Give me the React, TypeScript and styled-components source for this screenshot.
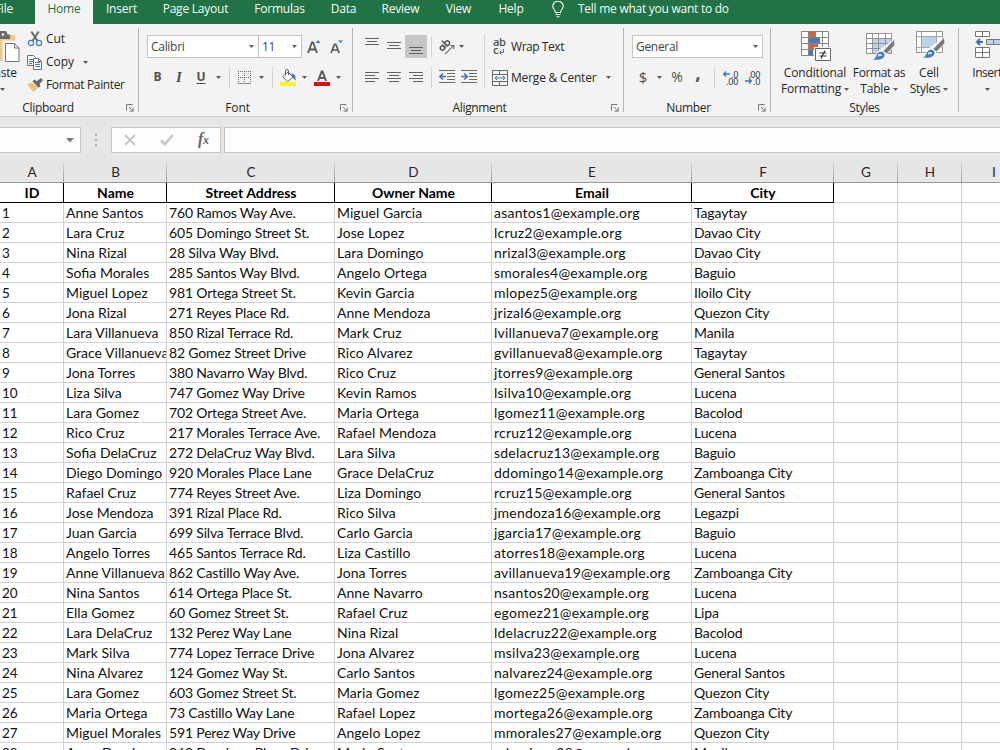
import React from "react";
import styled, { createGlobalStyle } from "styled-components";

const UI = '"Open Sans", "Noto Sans", sans-serif';
const SHEET = 'Lato, "Open Sans", sans-serif';

const GlobalStyle = createGlobalStyle`
  *, *::before, *::after { box-sizing: border-box; }
  html, body { margin: 0; padding: 0; overflow: hidden; background: #fff; }
`;

const Window = styled.div`
  width: 1000px;
  height: 750px;
  overflow: hidden;
  display: flex;
  flex-direction: column;
  background: #fff;
  color: #262626;
  font: 12px/16px ${UI};
  font-variant-ligatures: none;
  white-space: nowrap;
`;

/* ---------- tab strip ---------- */
const TabStrip = styled.nav`
  display: flex;
  flex: none;
  height: 24px;
  background: #217346;
  color: #f4faf6;
`;

const Tab = styled.div<{ $w: number; $active?: boolean }>`
  flex: none;
  width: ${(p) => p.$w}px;
  display: flex;
  justify-content: center;
  padding-top: 1px;
  letter-spacing: -0.22px;
  background: ${(p) => (p.$active ? "#f3f3f3" : "transparent")};
  color: ${(p) => (p.$active ? "#217346" : "inherit")};
`;

const FileTab = styled(Tab)`
  justify-content: flex-end;
  padding-right: 22px;
`;

const TellMe = styled.div`
  display: flex;
  align-items: flex-start;
  gap: 14px;
  padding-left: 15px;
  padding-top: 1px;
  letter-spacing: -0.26px;
`;

/* ---------- ribbon ---------- */
const Ribbon = styled.div`
  display: flex;
  flex: none;
  height: 93px;
  padding: 4px 0;
  background: #f3f3f3;
  border-bottom: 1px solid #cbcbcb;
`;

const Group = styled.section<{ $w: number }>`
  flex: none;
  width: ${(p) => p.$w}px;
  display: flex;
  flex-direction: column;
  border-right: 1px solid #b4b4b4;
`;

const GroupBody = styled.div<{ $left?: number }>`
  flex: 1;
  display: flex;
  padding-left: ${(p) => p.$left ?? 0}px;
`;

const GroupFooter = styled.footer<{ $inset?: number; $ls?: number }>`
  flex: none;
  display: grid;
  grid-template-columns: 12px 1fr 12px;
  align-items: center;
  height: 9px;
  line-height: 9px;
  letter-spacing: ${(p) => p.$ls ?? -0.1}px;
  span {
    text-align: center;
    padding-right: ${(p) => p.$inset ?? 0}px;
  }
`;

const Stack = styled.div`
  display: flex;
  flex-direction: column;
`;

const ToolRow = styled.div<{ $h?: number }>`
  display: flex;
  align-items: center;
  height: ${(p) => p.$h ?? 23}px;
`;

const ToolRows = styled.div`
  display: flex;
  flex-direction: column;
  gap: 8px;
  padding-top: 7px;
`;

const Slot = styled.div<{ $w: number; $on?: boolean }>`
  flex: none;
  width: ${(p) => p.$w}px;
  height: 23px;
  display: flex;
  align-items: center;
  justify-content: center;
  background: ${(p) => (p.$on ? "#c6c6c6" : "transparent")};
`;

const Glyph = styled(Slot)<{ $size?: number; $weight?: number; $italic?: boolean; $underline?: boolean; $raise?: number }>`
  padding-bottom: ${(p) => p.$raise ?? 2}px;
  font-size: ${(p) => p.$size ?? 12}px;
  font-weight: ${(p) => p.$weight ?? 700};
  font-style: ${(p) => (p.$italic ? "italic" : "normal")};
  font-family: ${(p) => (p.$italic ? '"Liberation Serif", serif' : UI)};
  text-decoration: ${(p) => (p.$underline ? "underline" : "none")};
  text-underline-offset: 2px;
  color: #505050;
`;

const Rule = styled.div<{ $before?: number; $after?: number; $h?: number }>`
  flex: none;
  width: 1px;
  height: ${(p) => p.$h ?? 21}px;
  margin-left: ${(p) => p.$before ?? 0}px;
  margin-right: ${(p) => p.$after ?? 0}px;
  background: #d2d2d2;
`;

const Combo = styled.div<{ $w: number; $joined?: boolean }>`
  flex: none;
  width: ${(p) => p.$w}px;
  height: 23px;
  margin-left: ${(p) => (p.$joined ? -1 : 0)}px;
  display: flex;
  align-items: center;
  justify-content: space-between;
  padding: 0 4px 0 3px;
  letter-spacing: -0.3px;
  background: #fff;
  border: 1px solid #c3c3c3;
  color: #444;
`;

const Command = styled.div<{ $h: number; $gap?: number; $ls?: number }>`
  display: flex;
  align-items: center;
  height: ${(p) => p.$h}px;
  gap: ${(p) => p.$gap ?? 3}px;
  letter-spacing: ${(p) => p.$ls ?? -0.1}px;
`;

const CaretBox = styled.span<{ $left?: number }>`
  display: flex;
  margin-left: ${(p) => p.$left ?? 0}px;
`;

const BigButton = styled.div<{ $w: number; $pull?: number }>`
  flex: none;
  width: ${(p) => p.$w}px;
  margin-left: ${(p) => p.$pull ?? 0}px;
  display: flex;
  flex-direction: column;
  align-items: center;
  padding-top: 3px;
  svg { flex: none; }
`;

const BigLine = styled.span<{ $ls?: number }>`
  display: flex;
  align-items: center;
  gap: 3px;
  height: 16px;
  letter-spacing: ${(p) => p.$ls ?? -0.15}px;
`;

const BigIcon = styled.div<{ $nudge?: number }>`
  height: 34px;
  display: flex;
  padding-left: ${(p) => p.$nudge ?? 0}px;
`;

/* ---------- formula bar ---------- */
const FormulaBar = styled.div`
  display: flex;
  flex: none;
  height: 36px;
  padding-top: 10px;
  background: #e6e6e6;
`;

const Box = styled.div<{ $w?: number }>`
  flex: ${(p) => (p.$w ? "none" : "1")};
  width: ${(p) => (p.$w ? `${p.$w}px` : "auto")};
  height: 26px;
  display: flex;
  align-items: center;
  background: #fdfdfd;
  border: 1px solid #c4c4c4;
`;

const NameBox = styled(Box)`
  justify-content: flex-end;
  padding-right: 6px;
  border-left: 0;
`;

const FormulaInput = styled(Box)`
  border-right: 0;
`;

const Actions = styled(Box)`
  gap: 24px;
  padding-left: 12px;
  margin-right: 3px;
`;

const Grip = styled.div`
  flex: none;
  width: 30px;
  display: flex;
  align-items: center;
  justify-content: center;
`;

/* ---------- sheet ---------- */
const COLUMNS = "64px 103px 168px 157px 200px 142px 64px 64px 64px";

const Letters = styled.div`
  display: grid;
  flex: none;
  grid-template-columns: ${COLUMNS};
  height: 30px;
  padding-top: 9px;
  background: #e6e6e6;
  border-bottom: 1px solid #999;
`;

const Letter = styled.div`
  display: flex;
  justify-content: center;
  align-items: center;
  padding-left: 1px;
  border-right: 1px solid;
  border-image: linear-gradient(#d6d6d6, #9a9a9a) 1;
  font: 13.5px/18px ${SHEET};
  color: #262626;
`;

const Row = styled.div`
  display: grid;
  flex: none;
  grid-template-columns: ${COLUMNS};
  height: 20px;
`;

const Cell = styled.div<{ $ls?: number; $size?: number }>`
  overflow: hidden;
  padding-left: 2px;
  border-right: 1px solid #d0d0d0;
  border-bottom: 1px solid #d0d0d0;
  font: ${(p) => p.$size ?? 14}px/20px ${SHEET};
  letter-spacing: ${(p) => p.$ls ?? 0}px;
  color: #111;
`;

const HeadCell = styled(Cell)`
  padding-left: 1px;
  text-align: center;
  font-weight: 700;
  color: #000;
  border-color: #000;
`;

/* ---------- icons ---------- */
const Caret = ({ left }: { left?: number }) => (
  <CaretBox $left={left}>
    <svg width="5" height="3" viewBox="0 0 5 3"><path d="M0 0h5L2.5 3z" fill="#5c5c5c" /></svg>
  </CaretBox>
);

const Launcher = () => (
  <svg width="8" height="8" viewBox="0 0 8 8" fill="none" stroke="#777">
    <path d="M.5 6.5v-6h6M3 3l4 4M7.2 3.5v3.7H3.5" />
  </svg>
);

const BulbIcon = () => (
  <svg width="12" height="17" viewBox="0 0 12 17" fill="none" stroke="#fff" strokeWidth="1.1">
    <path d="M3.5 11.5C3.5 9 .8 8.300.8 5.200A5.200 5 0 0 1 11.200 5.200C11.200 8.300 8.500 9 8.500 11.500zM3.500 13.500h5M4.500 15.700h3" />
  </svg>
);

const PasteIcon = () => (
  <svg width="36" height="32" viewBox="0 0 36 32">
    <path d="M2 4h29v26H2z" fill="#efc887" />
    <path d="M10 8V3.500h4.500a3.500 3.500 0 0 1 9 0H26V8z" fill="#6b6b6b" />
    <circle cx="19" cy="3.500" r="1.300" fill="#f3f3f3" />
    <path d="M19.500 10.500h12l4 4.500v15.500h-16z" fill="#f3f3f3" stroke="#f3f3f3" strokeWidth="2" />
    <path d="M21.500 12.500h9l4.500 4.500v13.500H21.500zM30.500 12.500V17H35" fill="#fff" stroke="#737373" />
  </svg>
);

const CutIcon = () => (
  <svg width="16" height="16" viewBox="0 0 16 16" fill="none">
    <path d="M4.300.5 10.500 10M11.700.5 5.500 10" stroke="#6a6a6a" strokeWidth="2" />
    <circle cx="4" cy="12" r="2.600" stroke="#4a7ebb" strokeWidth="1.200" />
    <circle cx="12" cy="12" r="2.600" stroke="#4a7ebb" strokeWidth="1.200" />
  </svg>
);

const CopyIcon = () => (
  <svg width="16" height="15" viewBox="0 0 16 15" fill="#fff" stroke="#6e6e6e">
    <path d="M.5.500h6l2 2v8h-8z" />
    <path d="M2 4.500h4M2 6.500h4M2 8.500h3" stroke="#4a7ebb" />
    <path d="M6.500 3.500h5l3 3v8h-8zM11.500 3.500v3h3" />
    <path d="M8 7.500h5M8 9.500h5M8 11.500h5" stroke="#4a7ebb" />
  </svg>
);

const BrushIcon = () => (
  <svg width="16" height="14" viewBox="0 0 16 14">
    <path d="M0 6.500 6 4l5.500 5.500L6.500 14z" fill="#efc07a" />
    <path d="m5.500 3.200 2-1.700 2.300 1.700L14 0l2 2-3.500 4 1 2-2 1.700z" fill="#666" />
    <path d="m5 4 6.300 6" stroke="#f3f3f3" strokeWidth=".8" />
  </svg>
);

const GrowFont = ({ down }: { down?: boolean }) => (
  <svg width="14" height="16" viewBox="0 0 14 16">
    {down ? (
      <>
        <path d="M1 14 4.500 5.300h1.300L9.200 14M2.400 11h5.500" fill="none" stroke="#595959" strokeWidth="1.700" />
        <path d="M8 1.500h5L10.500 4z" fill="#3f74b5" />
      </>
    ) : (
      <>
        <path d="M1 14 5 3.300h1L10 14M2.500 10.500h6" fill="none" stroke="#595959" strokeWidth="1.800" />
        <path d="M8.500 4h5L11 1.300z" fill="#3f74b5" />
      </>
    )}
  </svg>
);

const BordersIcon = () => (
  <svg width="14" height="14" viewBox="0 0 14 14" stroke="#666" fill="none">
    <path d="M0 .5h14M0 6.500h14M.5 0v12M6.500 0v12M12.500 0v12" strokeDasharray="1 1" />
    <path d="M0 12.500h13" stroke="#8a8a8a" />
  </svg>
);

const FillIcon = () => (
  <svg width="16" height="17" viewBox="0 0 16 17">
    <path d="M2.500 7.500 8 3l5 5-5.500 4.500z" fill="#fff" stroke="#666" />
    <path d="M5.500 6V2a1.500 1.500 0 0 1 3 0v4" fill="none" stroke="#666" />
    <path d="M11.500 4.500c3 .5 4.500 2.500 4 7l-3-3.500z" fill="#3f74b5" />
    <rect y="13" width="16" height="4" fill="#fbf520" />
  </svg>
);

const FontColorIcon = () => (
  <svg width="16" height="16" viewBox="0 0 16 16">
    <path d="M4 11 7.700 1.500h.8L12 11M5.300 8h5.500" fill="none" stroke="#595959" strokeWidth="2" />
    <rect y="12" width="16" height="4" fill="#d90f12" />
  </svg>
);

const Lines = ({ rows }: { rows: [number, number, number][] }) => (
  <svg width="14" height="19" viewBox="0 0 14 19" fill="#616161">
    {rows.map(([x, y, w]) => <rect key={y} x={x} y={y} width={w} height="1" />)}
  </svg>
);

const OrientationIcon = () => (
  <svg width="17" height="16" viewBox="0 0 17 16">
    <g transform="rotate(-45 6 6)" fill="none" stroke="#505050" strokeWidth="1.400">
      <circle cx="2.800" cy="7" r="2.200" />
      <path d="M5 4.500v5M7.500 1.500v8" />
      <circle cx="9.700" cy="7" r="2.200" />
    </g>
    <path d="M7 15.200 15.500 6.700M12.300 6.500h3.500V10" fill="none" stroke="#6a6a6a" strokeWidth="1.200" />
  </svg>
);

const IndentIcon = ({ right }: { right?: boolean }) => (
  <svg width="16" height="15" viewBox="0 0 16 15" fill="none">
    <path d="M0 .5h16M8 3.500h8M8 6.500h8M8 9.500h8M0 12.500h16" stroke="#6a6a6a" />
    {right
      ? <path d="M0 6.500h5M3.200 3.500l3 3-3 3" stroke="#3f74b5" strokeWidth="1.700" />
      : <path d="M7 6.500H2M4 3.500l-3 3 3 3" stroke="#3f74b5" strokeWidth="1.700" />}
  </svg>
);

const WrapGlyph = styled.span`
  position: relative;
  width: 15px;
  height: 18px;
  padding-left: 1px;
  font: 600 11px/8px ${UI};
  letter-spacing: -0.4px;
  color: #505050;
  white-space: pre-line;
  svg { position: absolute; right: 2px; bottom: 1px; }
`;

const WrapIcon = () => (
  <WrapGlyph>
    {"ab\nc"}
    <svg width="6" height="6" viewBox="0 0 6 6" fill="none" stroke="#3f74b5"><path d="M4.500 0v3.500H1M2.500 1.500l-2 2 2 2" /></svg>
  </WrapGlyph>
);

const MergeIcon = () => (
  <svg width="16" height="16" viewBox="0 0 16 16" fill="none" stroke="#6a6a6a">
    <path d="M.5.500h15v15H.5zM.5 4.500h15M.5 11.500h15M7.500.5v4M7.500 11.500v4" />
    <path d="M3 8h10M5 6 3 8l2 2M11 6l2 2-2 2" stroke="#3f74b5" />
  </svg>
);

const DecimalGlyph = styled.span`
  display: flex;
  flex-direction: column;
  align-items: flex-end;
  width: 16px;
  font: 9px/7px "Noto Sans", sans-serif;
  letter-spacing: -0.3px;
  color: #333;
  div { display: flex; align-items: center; gap: 1px; height: 7px; }
`;

const DecimalIcon = ({ fewer }: { fewer?: boolean }) => {
  const arrow = (
    <svg width="7" height="6" viewBox="0 0 7 6" fill="none" stroke="#3f74b5" strokeWidth="1.300">
      <path d={fewer ? "M0 3h6M4 .5 6.300 3 4 5.500" : "M7 3H1M3 .5.700 3 3 5.500"} />
    </svg>
  );
  return (
    <DecimalGlyph>
      <div>{fewer ? ".00" : <>{arrow}.0</>}</div>
      <div>{fewer ? <>{arrow}.0</> : ".00"}</div>
    </DecimalGlyph>
  );
};

const BrushOverlay = ({ x, y }: { x: number; y: number }) => (
  <g transform={`translate(${x} ${y})`}>
    <path d="M21.500 0v7L12 17l-5 4H-1l8-11z" fill="#f3f3f3" />
    <path d="m21 1 .5 5-8 8.500-3-2.500z" fill="#777" />
    <path d="M0 20.500c3-1 3-4 5-6.500 3-2.500 7-.5 6.500 2.500-.8 4-6.500 5-11.500 4z" fill="#3f7dbd" />
    <path d="M5.500 17.500c0-2 2.500-2.500 3-.5" fill="none" stroke="#fff" strokeWidth="1.300" />
  </g>
);

const ConditionalIcon = () => (
  <svg width="30" height="30" viewBox="0 0 30 30">
    <path d="M.5.500h27v24H.5z" fill="#fff" />
    <path d="M8 1h6v5H8zM8 13h9v5H8z" fill="#d9603b" />
    <path d="M8 7h11v5H8zM8 19h4v5H8z" fill="#3f7dbd" />
    <path d="M.5.500h27v24H.5zM.5 6.500h27M.5 12.500h27M.5 18.500h27M7.500.5v24M14.500.5v6M21.500.5v24" fill="none" stroke="#858585" />
    <path d="M13 16h17v14H13z" fill="#f3f3f3" />
    <path d="M14.500 17.500h15v12h-15z" fill="#fff" stroke="#666" />
    <path d="M18.500 22h7M18.500 25h7M24 19.500l-4 8" stroke="#333" strokeWidth="1.200" fill="none" />
  </svg>
);

const FormatTableIcon = () => (
  <svg width="30" height="30" viewBox="0 0 30 30">
    <path d="M.5 2.500h25v20H.5z" fill="#fff" />
    <path d="M7 8h18v14H7z" fill="#bdd2ea" />
    <path d="M.5 2.500h25v20H.5zM.5 7.500h25M.5 12.500h25M.5 17.500h25M6.500 2.500v20M12.500 2.500v20M19.500 2.500v20" fill="none" stroke="#929292" />
    <BrushOverlay x={7} y={8} />
  </svg>
);

const CellStylesIcon = () => (
  <svg width="30" height="30" viewBox="0 0 30 30">
    <path d="M.5.500h26v21H.5z" fill="#fff" stroke="#929292" />
    <path d="M.5 5.500h26M.5 16.500h26M5.500.5v21M20.500.5v21" fill="none" stroke="#a5a5a5" />
    <path d="M6 6h14v10H6z" fill="#bdd2ea" />
    <BrushOverlay x={7} y={6} />
  </svg>
);

const InsertIcon = () => (
  <svg width="32" height="30" viewBox="0 0 32 30">
    <g fill="#fff" stroke="#777">
      <path d="M.5.500h14v5H.5zM7.500.5v5M.5 16.500h14v10H.5zM.5 21.500h14M7.500 16.500v10" />
      <path d="M11.500 8.500h20v5h-20zM18.500 8.500v5" fill="#bdd2ea" />
    </g>
    <path d="M8 11H2M5 8l-3 3 3 3" fill="none" stroke="#3f74b5" strokeWidth="2" />
  </svg>
);

const CancelIcon = () => (
  <svg width="12" height="12" viewBox="0 0 12 12" fill="none" stroke="#c3c3c3" strokeWidth="1.900"><path d="m1 1 10 10M11 1 1 11" /></svg>
);
const EnterIcon = () => (
  <svg width="14" height="12" viewBox="0 0 14 12" fill="none" stroke="#c6c6c6" strokeWidth="2.600"><path d="m1 6.500 3.800 3.700L13 1" /></svg>
);

const Fx = styled.span`
  padding-bottom: 2px;
  font: italic 700 16px/18px "Liberation Serif", serif;
  letter-spacing: -0.3px;
  color: #666;
  small { font-size: 12px; }
`;

/* ---------- data ---------- */
const TABS: [string, number][] = [
  ["Home", 58], ["Insert", 57], ["Page Layout", 91], ["Formulas", 77],
  ["Data", 51], ["Review", 63], ["View", 53], ["Help", 52],
];

const HEAD = ["ID", "Name", "Street Address", "Owner Name", "Email", "City"];

/* letter spacing of each data column */
const SPACING = [-0.2, 0, -0.17, 0.05, 0.23, -0.13];

const DATA = `Anne Santos|760 Ramos Way Ave.|Miguel Garcia|asantos1|Tagaytay
Lara Cruz|605 Domingo Street St.|Jose Lopez|lcruz2|Davao City
Nina Rizal|28 Silva Way Blvd.|Lara Domingo|nrizal3|Davao City
Sofia Morales|285 Santos Way Blvd.|Angelo Ortega|smorales4|Baguio
Miguel Lopez|981 Ortega Street St.|Kevin Garcia|mlopez5|Iloilo City
Jona Rizal|271 Reyes Place Rd.|Anne Mendoza|jrizal6|Quezon City
Lara Villanueva|850 Rizal Terrace Rd.|Mark Cruz|lvillanueva7|Manila
Grace Villanueva|82 Gomez Street Drive|Rico Alvarez|gvillanueva8|Tagaytay
Jona Torres|380 Navarro Way Blvd.|Rico Cruz|jtorres9|General Santos
Liza Silva|747 Gomez Way Drive|Kevin Ramos|lsilva10|Lucena
Lara Gomez|702 Ortega Street Ave.|Maria Ortega|lgomez11|Bacolod
Rico Cruz|217 Morales Terrace Ave.|Rafael Mendoza|rcruz12|Lucena
Sofia DelaCruz|272 DelaCruz Way Blvd.|Lara Silva|sdelacruz13|Baguio
Diego Domingo|920 Morales Place Lane|Grace DelaCruz|ddomingo14|Zamboanga City
Rafael Cruz|774 Reyes Street Ave.|Liza Domingo|rcruz15|General Santos
Jose Mendoza|391 Rizal Place Rd.|Rico Silva|jmendoza16|Legazpi
Juan Garcia|699 Silva Terrace Blvd.|Carlo Garcia|jgarcia17|Baguio
Angelo Torres|465 Santos Terrace Rd.|Liza Castillo|atorres18|Lucena
Anne Villanueva|862 Castillo Way Ave.|Jona Torres|avillanueva19|Zamboanga City
Nina Santos|614 Ortega Place St.|Anne Navarro|nsantos20|Lucena
Ella Gomez|60 Gomez Street St.|Rafael Cruz|egomez21|Lipa
Lara DelaCruz|132 Perez Way Lane|Nina Rizal|ldelacruz22|Bacolod
Mark Silva|774 Lopez Terrace Drive|Jona Alvarez|msilva23|Lucena
Nina Alvarez|124 Gomez Way St.|Carlo Santos|nalvarez24|General Santos
Lara Gomez|603 Gomez Street St.|Maria Gomez|lgomez25|Quezon City
Maria Ortega|73 Castillo Way Lane|Rafael Lopez|mortega26|Zamboanga City
Miguel Morales|591 Perez Way Drive|Angelo Lopez|mmorales27|Quezon City
Anne Domingo|363 Domingo Place Drive|Mario Santos|adomingo28|Manila`
  .split("\n")
  .map((line, i) => {
    const [name, street, owner, user, city] = line.split("|");
    return [String(i + 1), name, street, owner, `${user}@example.org`, city];
  });

const BLANK = ["G", "H", "I"];

export default function App() {
  return (
    <Window>
      <GlobalStyle />
      <TabStrip>
        <FileTab $w={35}>File</FileTab>
        {TABS.map(([name, w]) => <Tab key={name} $w={w} $active={name === "Home"}>{name}</Tab>)}
        <TellMe><BulbIcon /><span>Tell me what you want to do</span></TellMe>
      </TabStrip>

      <Ribbon>
        <Group $w={139}>
          <GroupBody>
            <BigButton $w={36} $pull={-16}>
              <BigIcon><PasteIcon /></BigIcon>
              <BigLine>Paste</BigLine>
              <BigLine><Caret /></BigLine>
            </BigButton>
            <GroupBody $left={7}>
              <Stack>
                <Command $h={22}><CutIcon />Cut</Command>
                <Command $h={24} $ls={-0.05}><CopyIcon />Copy<Caret left={6} /></Command>
                <Command $h={22} $ls={-0.36}><BrushIcon />Format Painter</Command>
              </Stack>
            </GroupBody>
          </GroupBody>
          <GroupFooter $inset={42} $ls={-0.35}><i /><span>Clipboard</span><Launcher /></GroupFooter>
        </Group>

        <Group $w={214}>
          <GroupBody $left={8}>
            <ToolRows>
              <ToolRow>
                <Combo $w={112}>Calibri<Caret /></Combo>
                <Combo $w={44} $joined>11<Caret /></Combo>
                <Slot $w={24}><GrowFont /></Slot>
                <Slot $w={21}><GrowFont down /></Slot>
              </ToolRow>
              <ToolRow>
                <Glyph $w={21}>B</Glyph>
                <Glyph $w={22} $italic $size={15}>I</Glyph>
                <Glyph $w={22} $underline>U</Glyph>
                <Slot $w={12}><Caret /></Slot>
                <Rule $before={5} $after={8} />
                <BordersIcon />
                <Slot $w={18}><Caret /></Slot>
                <Rule $before={2} $after={7} />
                <FillIcon />
                <Slot $w={16}><Caret /></Slot>
                <Slot $w={2} />
                <FontColorIcon />
                <Slot $w={16}><Caret /></Slot>
              </ToolRow>
            </ToolRows>
          </GroupBody>
          <GroupFooter $inset={16}><i /><span>Font</span><Launcher /></GroupFooter>
        </Group>

        <Group $w={271}>
          <GroupBody $left={8}>
            <ToolRows>
              <ToolRow>
                <Slot $w={22}><Lines rows={[[0, 1, 14], [2, 4, 10], [0, 7, 14]]} /></Slot>
                <Slot $w={22}><Lines rows={[[0, 5, 14], [2, 8, 10], [0, 11, 14]]} /></Slot>
                <Slot $w={22} $on><Lines rows={[[0, 10, 14], [2, 13, 10], [0, 16, 14]]} /></Slot>
                <Rule $before={4} $after={6} />
                <OrientationIcon />
                <Slot $w={12}><Caret /></Slot>
              </ToolRow>
              <ToolRow>
                <Slot $w={22}><Lines rows={[[0, 4, 14], [0, 7, 10], [0, 10, 14], [0, 13, 10]]} /></Slot>
                <Slot $w={22}><Lines rows={[[0, 4, 14], [2, 7, 10], [0, 10, 14], [2, 13, 10]]} /></Slot>
                <Slot $w={22}><Lines rows={[[0, 4, 14], [4, 7, 10], [0, 10, 14], [4, 13, 10]]} /></Slot>
                <Rule $before={4} $after={7} />
                <IndentIcon />
                <Slot $w={6} />
                <IndentIcon right />
              </ToolRow>
            </ToolRows>
            <ToolRow $h={66}><Rule $before={7} $after={7} $h={54} /></ToolRow>
            <ToolRows>
              <Command $h={23} $gap={4} $ls={-0.45}><WrapIcon />Wrap Text</Command>
              <Command $h={23} $ls={-0.2}><MergeIcon />Merge &amp; Center<Caret left={7} /></Command>
            </ToolRows>
          </GroupBody>
          <GroupFooter $inset={17} $ls={-0.35}><i /><span>Alignment</span><Launcher /></GroupFooter>
        </Group>

        <Group $w={147}>
          <GroupBody $left={8}>
            <ToolRows>
              <ToolRow><Combo $w={131}>General<Caret /></Combo></ToolRow>
              <ToolRow>
                <Glyph $w={22} $size={15} $weight={400}>$</Glyph>
                <Slot $w={10}><Caret /></Slot>
                <Glyph $w={26} $size={14} $weight={400}>%</Glyph>
                <Glyph $w={16} $size={19} $raise={11}>,</Glyph>
                <Rule $before={8} $after={7} />
                <DecimalIcon />
                <Slot $w={6} />
                <DecimalIcon fewer />
              </ToolRow>
            </ToolRows>
          </GroupBody>
          <GroupFooter $inset={17} $ls={-0.3}><i /><span>Number</span><Launcher /></GroupFooter>
        </Group>

        <Group $w={188}>
          <GroupBody $left={8}>
            <BigButton $w={72}>
              <BigIcon $nudge={2}><ConditionalIcon /></BigIcon>
              <BigLine>Conditional</BigLine>
              <BigLine>Formatting<Caret /></BigLine>
            </BigButton>
            <BigButton $w={56}>
              <BigIcon $nudge={4}><FormatTableIcon /></BigIcon>
              <BigLine $ls={-0.4}>Format as</BigLine>
              <BigLine>Table<Caret /></BigLine>
            </BigButton>
            <BigButton $w={44}>
              <BigIcon $nudge={4}><CellStylesIcon /></BigIcon>
              <BigLine>Cell</BigLine>
              <BigLine $ls={-0.3}>Styles<Caret /></BigLine>
            </BigButton>
          </GroupBody>
          <GroupFooter $ls={-0.3}><i /><span>Styles</span><i /></GroupFooter>
        </Group>

        <GroupBody $left={12}>
          <BigButton $w={32}>
            <BigIcon $nudge={8}><InsertIcon /></BigIcon>
            <BigLine $ls={-0.5}>Insert</BigLine>
            <BigLine><Caret /></BigLine>
          </BigButton>
        </GroupBody>
      </Ribbon>

      <FormulaBar>
        <NameBox $w={81}>
          <svg width="8" height="5" viewBox="0 0 8 5"><path d="M0 0h8L4 4.500z" fill="#777" /></svg>
        </NameBox>
        <Grip><svg width="2" height="12" viewBox="0 0 2 12" fill="#aaa"><path d="M0 0h2v2H0zM0 5h2v2H0zM0 10h2v2H0z" /></svg></Grip>
        <Actions $w={110}><CancelIcon /><EnterIcon /><Fx>f<small>x</small></Fx></Actions>
        <FormulaInput />
      </FormulaBar>

      <Letters>
        {["A", "B", "C", "D", "E", "F", "G", "H", "I"].map((c) => <Letter key={c}>{c}</Letter>)}
      </Letters>
      <Row>
        {HEAD.map((h) => <HeadCell key={h}>{h}</HeadCell>)}
        {BLANK.map((b) => <Cell key={b} />)}
      </Row>
      {DATA.map((cells) => (
        <Row key={cells[0]}>
          {cells.map((text, i) => <Cell key={i} $ls={SPACING[i]} $size={i === 0 ? 13.5 : 14}>{text}</Cell>)}
          {BLANK.map((b) => <Cell key={b} />)}
        </Row>
      ))}
    </Window>
  );
}
